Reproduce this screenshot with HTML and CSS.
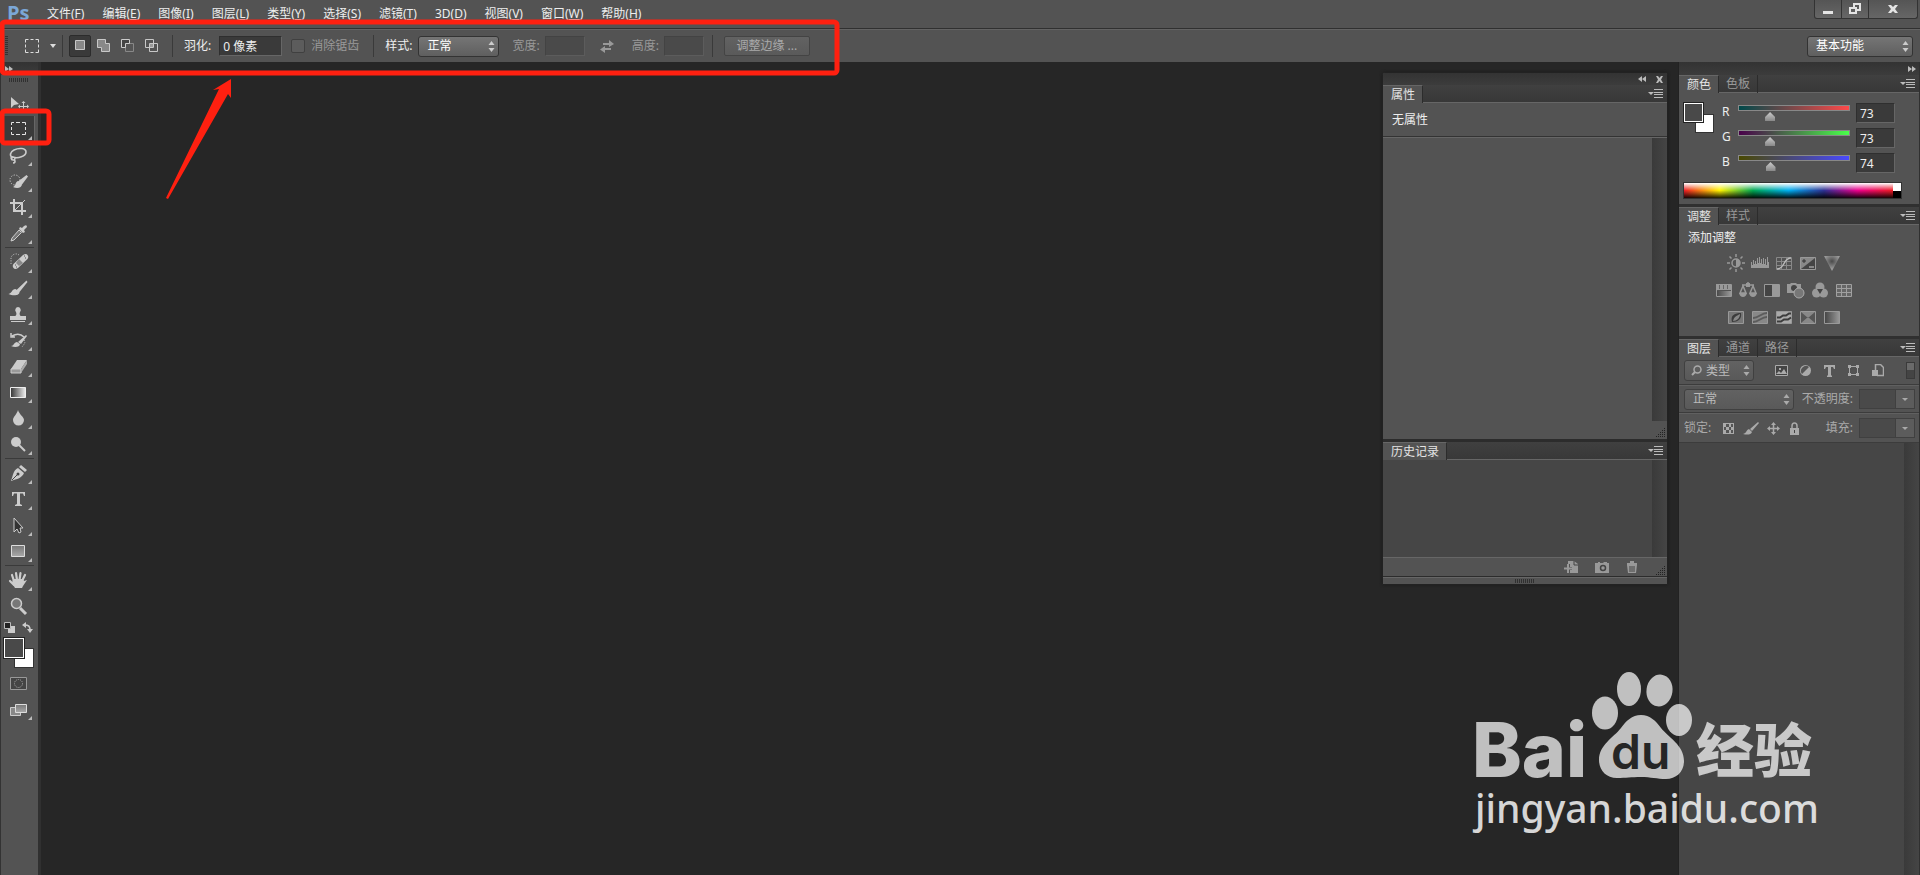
FILE: index.html
```
<!DOCTYPE html>
<html lang="zh-CN">
<head>
    <meta charset="UTF-8">
    <meta name="viewport" content="width=device-width, initial-scale=1.0">
    <title>Ps</title>
    <link rel="stylesheet" href="styles.css">
</head>
<body>

    <!-- Shared icons -->
    <svg class="sprite" aria-hidden="true">
        <symbol id="updown" viewBox="0 0 7 11"><path d="M3.500 0L6.500 4H.5zM3.500 11L6.500 7H.5z"/></symbol>
        <symbol id="menu-lines" viewBox="0 0 15 9"><path d="M0 3h6L3 6z"/><path d="M6 .5h9M6 3.500h9M6 5.500h9M6 8.500h9" stroke="currentColor"/></symbol>
        <symbol id="corner" viewBox="0 0 10 10"><path d="M9 0h1v1H9zM7 2h1v1H7zM9 2h1v1H9zM5 4h1v1H5zM7 4h1v1H7zM9 4h1v1H9zM3 6h1v1H3zM5 6h1v1H5zM7 6h1v1H7zM9 6h1v1H9zM1 8h1v1H1zM3 8h1v1H3zM5 8h1v1H5zM7 8h1v1H7zM9 8h1v1H9z"/></symbol>
        <symbol id="double-right" viewBox="0 0 8 6"><path d="M0 0l4 3-4 3zM4 0l4 3-4 3z"/></symbol>
        <linearGradient id="fade" x1="0" x2="1"><stop offset="0" stop-color="#333"/><stop offset="1" stop-color="#eee"/></linearGradient>
        <linearGradient id="steel" x1="0" x2="0" y1="0" y2="1"><stop offset="0" stop-color="#777"/><stop offset="1" stop-color="#aaa"/></linearGradient>
        <linearGradient id="grey" x1="0" x2="1"><stop offset="0" stop-color="#444"/><stop offset="1" stop-color="#999"/></linearGradient>
        <radialGradient id="glow" cx=".5" cy=".35" r=".5"><stop offset="0" stop-color="#4a4a4a"/><stop offset="1" stop-color="#999"/></radialGradient>
    </svg>

    <header class="menubar">
        <span class="logo">Ps</span>
        <nav class="menu">
            <a href="#">文件(<u>F</u>)</a>
            <a href="#">编辑(<u>E</u>)</a>
            <a href="#">图像(<u>I</u>)</a>
            <a href="#">图层(<u>L</u>)</a>
            <a href="#">类型(<u>Y</u>)</a>
            <a href="#">选择(<u>S</u>)</a>
            <a href="#">滤镜(<u>T</u>)</a>
            <a href="#">3D(<u>D</u>)</a>
            <a href="#">视图(<u>V</u>)</a>
            <a href="#">窗口(<u>W</u>)</a>
            <a href="#">帮助(<u>H</u>)</a>
        </nav>
        <div class="window-buttons">
            <button aria-label="最小化"><svg width="12" height="12"><path d="M1 8h10v3H1z"/></svg></button>
            <button aria-label="还原"><svg width="12" height="12" fill="none" stroke="#e4e4e4" stroke-width="2"><path d="M5 5V1h6v6H8M1 5h6v5H1z"/></svg></button>
            <button class="wide" aria-label="关闭"><svg width="12" height="12"><path d="M1 2h3l2 2 2-2h3L8 6l3 4H8L6 8l-2 2H1l3-4z"/></svg></button>
        </div>
    </header>

    <div class="options">
        <i class="grip-v"></i>
        <button class="preset" aria-label="选框工具">
            <svg width="14" height="14" fill="none" stroke="#ddd"><path d="M.5 3.500v-3h3M5.500.5h3M10.500.5h3v3M13.500 5.500v3M13.500 10.500v3h-3M8.500 13.500h-3M3.500 13.500h-3v-3M.5 8.500v-3"/></svg>
            <svg class="caret" width="6" height="4"><path d="M0 0h6L3 4z" fill="#ddd"/></svg>
        </button>
        <i class="divider"></i>
        <div class="modes">
            <button class="on" aria-label="新选区"><svg width="14" height="14"><path d="M2.500 1.500h9v9h-9z" fill="#888" stroke="#c8c8c8"/></svg></button>
            <button aria-label="添加到选区"><svg width="14" height="14"><path d="M.5.5h8v4h4v8h-8v-4h-4z" fill="#888" stroke="#c8c8c8"/></svg></button>
            <button aria-label="从选区减去"><svg width="14" height="14"><path d="M4.500 4.500h8v8h-8z" fill="#555" stroke="#888"/><path d="M4.500 8.500h-4v-8h8v4h-4z" fill="#444" stroke="#ccc"/></svg></button>
            <button aria-label="与选区交叉"><svg width="14" height="14" stroke="#c8c8c8" fill="none"><path d="M.5.500h8v8h-8zM4.500 4.500h8v8h-8z"/><path d="M5 5h3v3H5z" fill="#999" stroke="none"/></svg></button>
        </div>
        <i class="divider"></i>
        <label for="feather">羽化:</label>
        <input class="field feather" id="feather" type="text" value="0 像素">
        <label class="check"><input type="checkbox" disabled>消除锯齿</label>
        <i class="divider"></i>
        <label for="style">样式:</label>
        <div class="select style-select">
            <select id="style"><option>正常</option></select>
            <svg><use href="#updown"/></svg>
        </div>
        <label class="off" for="width">宽度:</label>
        <input class="field size" id="width" type="text" disabled>
        <button class="swap" aria-label="交换" disabled><svg width="14" height="13"><path d="M3 3h6V0l5 4-5 3V5H3zM11 8H5V6L0 9.500 5 13v-3h6z"/></svg></button>
        <label class="off" for="height">高度:</label>
        <input class="field size" id="height" type="text" disabled>
        <i class="divider"></i>
        <button class="refine" disabled>调整边缘 ...</button>
        <div class="select workspace">
            <select aria-label="工作区"><option>基本功能</option></select>
            <svg><use href="#updown"/></svg>
        </div>
    </div>

    <main class="workspace-area">

        <!-- Toolbox -->
        <aside class="tools">
            <div class="collapse"><svg width="8" height="6"><use href="#double-right"/></svg></div>
            <i class="grip-h"></i>
            <button class="single" aria-label="移动"><svg viewBox="0 0 24 24"><path d="M5 6v11l3-3 5-1z"/><path d="M17.500 11v9M13 15.500h9" stroke="#ccc"/><path d="M17.500 10l2 2h-4zM17.500 21l2-2h-4zM12 15.500l2-2v4zM23 15.500l-2-2v4z"/></svg></button>
            <button class="on" aria-label="选框"><svg viewBox="0 0 24 24"><path d="M5.500 8V5.500H8M10 5.500h4M16 5.500h3.500V8M19.500 10v3M19.500 15v2.500H16M14 17.500h-4M8 17.500H5.500V15M5.500 13v-3" fill="none" stroke="#e4e4e4"/></svg></button>
            <button aria-label="套索"><svg viewBox="0 0 24 24" fill="none" stroke="#ccc" stroke-width="1.600"><path d="M7 15c-4-2-3-6 1-8 5-2.500 12-2 12 2 0 4-8 7-13 5-3-1-2 3 0 3 3 0 2-3 0-3M8 17c2 1 1 3-1 3"/></svg></button>
            <button aria-label="快速选择"><svg viewBox="0 0 24 24"><circle cx="9" cy="11" r="5" fill="none" stroke="#ccc" stroke-dasharray="1.200 1.500"/><path d="M20.500 6l1.500 1.500-6 8-4-3zM12 12l4 3c0 4-5 5-9 3 3-1 2-5 5-6z"/></svg></button>
            <button aria-label="裁剪"><svg viewBox="0 0 24 24" fill="none" stroke="#ccc" stroke-width="2"><path d="M8 4v12h12M4 8h12v12"/><path d="M9 15L19 5" stroke-width="1"/></svg></button>
            <button aria-label="吸管"><svg viewBox="0 0 24 24"><path d="M14 6l2 1 2-2q3-2 3 1l-3 3 1 2-2 1-4-4z"/><path d="M13 9l2.500 2.500L8 19l-3 1 1-3z" fill="#777" stroke="#ccc"/></svg></button>
            <i class="rule"></i>
            <button aria-label="修复画笔"><svg viewBox="0 0 24 24"><path d="M13 5a5 5 0 0 0-8 3v6" fill="none" stroke="#ccc" stroke-dasharray="1 1.500"/><path d="M17 5q3-2 4.500 0t0 4L12 18q-3 2-4.500 0t0-4z"/><path d="M13 9l4 4-4 3-3-3z" fill="#888"/><path d="M18 6h1M19 8h1M9 15h1M10 17h1" stroke="#555"/></svg></button>
            <button aria-label="画笔"><svg viewBox="0 0 24 24"><path d="M20.500 4.500l1 1.500-8 10-3-2zM9.500 13l4 3c0 4-7 4-11 2 4-1 3-5 7-5z"/></svg></button>
            <button aria-label="仿制图章"><svg viewBox="0 0 24 24"><path d="M12 5a3 3 0 0 1 2 5c-1 2 0 4 1 4h5v4H4v-4h5c1 0 2-2 1-4a3 3 0 0 1 2-5zM5 19h14v1H5z"/></svg></button>
            <button aria-label="历史记录画笔"><svg viewBox="0 0 24 24"><path d="M6 8q7-4 12 1M5 5v4h4" fill="none" stroke="#ccc" stroke-width="1.500"/><path d="M20 7l1 1-6 8-3-2zM11 14l3 2c0 3-5 4-9 2 3 0 3-4 6-4z"/><path d="M18 12l1 3-3 4" fill="none" stroke="#ccc" stroke-dasharray="1 1.500"/></svg></button>
            <button aria-label="橡皮擦"><svg viewBox="0 0 24 24"><path d="M11 6h10l-6 9H5z"/><path d="M5 15h10v4H5z" fill="#999" stroke="#ccc"/><path d="M15 15l6-9v4l-6 9z" fill="#aaa"/></svg></button>
            <button aria-label="渐变"><svg viewBox="0 0 24 24"><path d="M4.500 7.500h15v10h-15z" fill="url(#fade)" stroke="#eee"/></svg></button>
            <button aria-label="模糊"><svg viewBox="0 0 24 24"><path d="M12 4c1 4 6 7 6 10a5.500 5.500 0 0 1-11 0c0-3 4-6 5-10z"/></svg></button>
            <button aria-label="减淡"><svg viewBox="0 0 24 24"><circle cx="10" cy="10" r="5"/><path d="M13 13l6 6" stroke="#ccc" stroke-width="2"/></svg></button>
            <i class="rule"></i>
            <button aria-label="钢笔"><svg viewBox="0 0 24 24"><path d="M15 4l6 5-2 2-6-5zM12 7l6 5c-2 5-7 6-13 8 2-5 2-11 7-13z"/><path d="M6 19l6-6" stroke="#444"/><circle cx="12" cy="13" r="1.500" fill="#444"/></svg></button>
            <button aria-label="文字"><svg viewBox="0 0 24 24"><path d="M6 5h13v4h-1l-1-2.500h-3V17l2 1v1H9v-1l2-1V6.500H8L7 9H6z"/></svg></button>
            <button aria-label="路径选择"><svg viewBox="0 0 24 24"><path d="M8 5v14l3-3 2 4 2-1-1-4h3z" fill="#333" stroke="#ccc"/></svg></button>
            <button aria-label="矩形"><svg viewBox="0 0 24 24"><path d="M5.500 6.500h13v11h-13z" fill="url(#steel)" stroke="#ddd"/></svg></button>
            <i class="rule"></i>
            <button aria-label="抓手"><svg viewBox="0 0 24 24"><path d="M8 13L6 7M11 12l-1-7M13.500 12l1-7M16 13l3-6M8 17l-4-4" stroke="#ccc" stroke-width="2.200" stroke-linecap="round"/><path d="M7 11h10l1 2 3-1-4 6-1 2H9l-3-5z"/></svg></button>
            <button class="single" aria-label="缩放"><svg viewBox="0 0 24 24"><path d="M14 14l6 6" stroke="#ccc" stroke-width="3"/><circle cx="10.500" cy="9.500" r="5" fill="#777" stroke="#ccc" stroke-width="1.500"/></svg></button>
            <div class="mini">
                <button aria-label="默认颜色"><svg width="11" height="11"><path d="M4 4h7v7H4z"/><path d="M.5.500h6v6h-6z" fill="#222" stroke="#bbb"/></svg></button>
                <button aria-label="切换颜色"><svg width="11" height="11"><path d="M2 3c5 0 6 1 6 6" fill="none" stroke="#ccc" stroke-width="1.500"/><path d="M0 3l4-3v6zM8 11L5 7h6z"/></svg></button>
            </div>
            <div class="swatches"><i class="back"></i><i class="front"></i></div>
            <button class="single" aria-label="快速蒙版"><svg viewBox="0 0 24 24"><path d="M4.500 6.500h16v12h-16z" fill="#444" stroke="#999"/><circle cx="12.500" cy="12.500" r="4" fill="none" stroke="#aaa" stroke-dasharray="1 1"/></svg></button>
            <button aria-label="屏幕模式"><svg viewBox="0 0 24 24"><path d="M4.500 10.500h10v8h-10z" fill="#888" stroke="#ccc"/><path d="M9.500 7.500h11v8h-11z" fill="url(#steel)" stroke="#ddd"/></svg></button>
        </aside>

        <section class="canvas"></section>

        <!-- Docked panels -->
        <aside class="dock">
            <div class="collapse"><svg width="8" height="6"><use href="#double-right"/></svg></div>

            <section class="panel">
                <div class="tabs">
                    <button class="tab active">颜色</button><button class="tab">色板</button>
                    <svg class="panel-menu"><use href="#menu-lines"/></svg>
                </div>
                <div class="color-body">
                    <div class="swatches small"><i class="back"></i><i class="front"></i></div>
                    <div class="channels">
                        <div class="channel">
                            <label for="red">R</label>
                            <div class="slider"><i class="bar red"></i><input id="red" type="range" max="255" value="73"></div>
                            <input class="field" aria-label="R" type="text" value="73">
                        </div>
                        <div class="channel">
                            <label for="green">G</label>
                            <div class="slider"><i class="bar green"></i><input id="green" type="range" max="255" value="73"></div>
                            <input class="field" aria-label="G" type="text" value="73">
                        </div>
                        <div class="channel">
                            <label for="blue">B</label>
                            <div class="slider"><i class="bar blue"></i><input id="blue" type="range" max="255" value="74"></div>
                            <input class="field" aria-label="B" type="text" value="74">
                        </div>
                    </div>
                </div>
                <div class="spectrum"><i class="hues"></i><i class="mono"></i></div>
            </section>

            <section class="panel">
                <div class="tabs">
                    <button class="tab active">调整</button><button class="tab">样式</button>
                    <svg class="panel-menu"><use href="#menu-lines"/></svg>
                </div>
                <div class="adjust-body">
                    <p>添加调整</p>
                    <div class="adjust-row">
                        <svg viewBox="0 0 18 18"><circle cx="9" cy="9" r="4" fill="none" stroke="#999" stroke-width="1.500"/><path d="M9 5a4 4 0 0 1 0 8z"/><path d="M9 0v3M9 15v3M0 9h3M15 9h3M2.500 2.500l2 2M13.500 13.500l2 2M2.500 15.500l2-2M13.500 4.500l2-2" stroke="#999" stroke-width="1.500"/></svg>
                        <svg viewBox="0 0 18 18"><path d="M0 14V8h1v3h1V6h1v4h1V7h1v3h1V4h1v5h1V3h1v6h1V5h1v5h1V4h1v6h1V5h1v6h1V3h1v5h1v6z"/></svg>
                        <svg viewBox="0 0 18 18"><path d="M1.500 3.500h15v12h-15zM6.500 3v12M11.500 3v12M1 7.500h15M1 11.500h15" fill="none" stroke="#888"/><path d="M2 15c8 0 6-11 14-11" fill="none" stroke="#bbb" stroke-width="1.500"/></svg>
                        <svg viewBox="0 0 18 18"><path d="M1.500 3.500h15v12h-15z" fill="#888" stroke="#999"/><path d="M2 15L16 4v11z" fill="#444"/><path d="M3 7h4M5 5v4" stroke="#333"/><path d="M10 13h5" stroke="#ccc"/></svg>
                        <svg viewBox="0 0 18 18"><path d="M1 2h16L9 17z" fill="url(#glow)"/></svg>
                    </div>
                    <div class="adjust-row">
                        <svg viewBox="0 0 18 18"><path d="M1 3h15v6H1z"/><path d="M1 10h15v6H1z" fill="url(#grey)"/><path d="M4.500 3v5M8.500 3v5M12.500 3v5" stroke="#666"/><path d="M1.500 3.500h15v12h-15z" fill="none" stroke="#999"/></svg>
                        <svg viewBox="0 0 18 18"><path d="M9 1v4M3 4h12M4 5l-3 7h6zM14 5l-3 7h6z" fill="none" stroke="#999" stroke-width="1.500"/><path d="M0 12h8q-1 4-4 4t-4-4M10 12h8q-1 4-4 4t-4-4M7 2h4v4H7z"/></svg>
                        <svg viewBox="0 0 18 18"><path d="M1.500 3.500h15v12h-15z" fill="#444" stroke="#999"/><path d="M9 4h7v11H9z"/></svg>
                        <svg viewBox="0 0 18 18"><path d="M0 3h3l1-1h5l1 1h4v9H0z"/><circle cx="7" cy="7" r="3" fill="#444"/><circle cx="12" cy="12" r="5" fill="#777" stroke="#aaa"/></svg>
                        <svg viewBox="0 0 18 18"><circle cx="9" cy="6" r="4.500"/><circle cx="5.500" cy="12" r="4.500"/><circle cx="12.500" cy="12" r="4.500"/><path d="M6 8h6l-3 5z" fill="#444"/></svg>
                        <svg viewBox="0 0 18 18"><path d="M1.500 3.500h15v12h-15zM6.500 3v12M11.500 3v12M1 7.500h15M1 11.500h15" fill="#666" stroke="#a0a0a0"/></svg>
                    </div>
                    <div class="adjust-row">
                        <svg viewBox="0 0 18 18"><path d="M1.500 3.500h15v12h-15z" fill="#777" stroke="#999"/><path d="M5 14C3 7 8 5 14 5c1 6-3 9-9 9z" fill="#3c3c3c"/><path d="M6 13C7 9 9 8 13 6c0 4-3 7-7 7z" fill="#888"/></svg>
                        <svg viewBox="0 0 18 18"><path d="M1.500 3.500h15v12h-15z" fill="#888" stroke="#999"/><path d="M2 10c6 0 8-5 14-5M2 14c6 0 8-5 14-5" fill="none" stroke="#5c5c5c" stroke-width="2"/></svg>
                        <svg viewBox="0 0 18 18"><path d="M1.500 3.500h15v12h-15z" fill="#aaa" stroke="#999"/><path d="M2 9.500h3l3-2h3l3-2h2M2 13.500h4l3-2h4l3-2" fill="none" stroke="#3c3c3c" stroke-width="2"/></svg>
                        <svg viewBox="0 0 18 18"><path d="M1.500 3.500h15v12h-15z" fill="#555" stroke="#999"/><path d="M2 4h14L9 10zM2 15h14L9 9z" fill="#888"/></svg>
                        <svg viewBox="0 0 18 18"><path d="M1.500 3.500h15v12h-15z" fill="url(#grey)" stroke="#999"/></svg>
                    </div>
                </div>
            </section>

            <section class="panel layers">
                <div class="tabs">
                    <button class="tab active">图层</button><button class="tab">通道</button><button class="tab">路径</button>
                    <svg class="panel-menu"><use href="#menu-lines"/></svg>
                </div>
                <div class="layer-row filter">
                    <div class="select kind">
                        <select aria-label="类型" disabled><option>类型</option></select>
                        <svg class="lens" viewBox="0 0 11 11"><circle cx="6.500" cy="4.500" r="3.500" fill="none" stroke="#aaa" stroke-width="1.500"/><path d="M4 7l-3 3" stroke="#aaa" stroke-width="2"/></svg>
                        <svg><use href="#updown"/></svg>
                    </div>
                    <div class="filters">
                        <svg viewBox="0 0 13 13"><path d="M.5 1.500h12v10H.5z" fill="#444" stroke="#aaa"/><path d="M1 10l3-3 2 2 3-4 3 5zM4 4h2v2H4z"/></svg>
                        <svg viewBox="0 0 13 13"><circle cx="6.500" cy="6.500" r="5.500"/><path d="M3 10a5 5 0 0 1 7-7z" fill="#555"/></svg>
                        <svg viewBox="0 0 13 13"><path d="M1 1h11v4h-1l-1-2H8v8l1 1v1H4v-1l1-1V3H3L2 5H1z"/></svg>
                        <svg viewBox="0 0 13 13"><path d="M2.500 2.500h8v8h-8z" fill="none" stroke="#aaa"/><path d="M1 1h3v3H1zM9 1h3v3H9zM1 9h3v3H1zM9 9h3v3H9z"/></svg>
                        <svg viewBox="0 0 13 13"><path d="M4.500 7V.5h5l3 3v8H6" fill="none" stroke="#aaa" stroke-width="1.500"/><path d="M1 6h6v6H1z"/></svg>
                    </div>
                    <button class="toggle" aria-label="滤镜开关" disabled></button>
                </div>
                <div class="layer-row">
                    <div class="select blend">
                        <select aria-label="混合模式" disabled><option>正常</option></select>
                        <svg><use href="#updown"/></svg>
                    </div>
                    <label class="push" for="opacity">不透明度:</label>
                    <div class="combo"><input id="opacity" type="text" disabled><button aria-label="不透明度" disabled></button></div>
                </div>
                <div class="layer-row lock-row">
                    <span>锁定:</span>
                    <div class="locks">
                        <svg viewBox="0 0 13 13"><path d="M1 1h11v11H1z"/><path d="M4 2h3v3H4zM9 2h2v3H9zM2 5h2v3H2zM7 5h2v3H7zM4 8h3v3H4zM9 8h2v3H9z" fill="#555"/></svg>
                        <svg viewBox="0 0 16 13"><path d="M15 0l1 1-7 8-2-2zM6 7l3 3c-1 3-5 3-9 2 4-1 3-4 6-5z"/></svg>
                        <svg viewBox="0 0 13 13"><path d="M6.500 0L9 3H4zM6.500 13L9 10H4zM0 6.500L3 4v5zM13 6.500L10 4v5z"/><path d="M6.500 2v9M2 6.500h9" stroke="#aaa" stroke-width="1.500"/></svg>
                        <svg viewBox="0 0 13 13"><path d="M2 6h9v7H2z"/><path d="M4 6V4q0-3 2.500-3T9 4v2" fill="none" stroke="#aaa" stroke-width="1.500"/><path d="M6 8h1v3H6z" fill="#444"/></svg>
                    </div>
                    <label class="push" for="fill">填充:</label>
                    <div class="combo"><input id="fill" type="text" disabled><button aria-label="填充" disabled></button></div>
                </div>
                <div class="layer-list"><i class="scroll"></i></div>
            </section>
        </aside>
    </main>

    <!-- Floating panel group -->
    <div class="floating">
        <div class="collapse">
            <svg width="8" height="6"><path d="M4 0L0 3l4 3zM8 0L4 3l4 3z"/></svg>
            <svg width="7" height="7"><path d="M0 0h2l1.500 2L5 0h2L5 3.500 7 7H5L3.500 5 2 7H0l2-3.500z"/></svg>
        </div>
        <div class="tabs">
            <button class="tab active">属性</button>
            <svg class="panel-menu"><use href="#menu-lines"/></svg>
        </div>
        <p class="empty">无属性</p>
        <div class="properties">
            <i class="scroll"></i>
            <svg class="corner"><use href="#corner"/></svg>
        </div>
        <div class="tabs">
            <button class="tab active">历史记录</button>
            <svg class="panel-menu"><use href="#menu-lines"/></svg>
        </div>
        <div class="history"><i class="scroll"></i></div>
        <div class="history-tools">
            <button aria-label="从当前状态创建新文档"><svg width="14" height="12"><path d="M4 0h6l4 3v9H6V9h2V6H6V3H4z"/><path d="M4 3v9M0 7.500h8" stroke="#999" stroke-width="2"/><path d="M10 0v4h4" fill="none" stroke="#444"/></svg></button>
            <button aria-label="创建新快照"><svg width="14" height="12"><path d="M0 2h3V1h2v1h3l1-1h3v1h2v10H0z"/><circle cx="8" cy="7" r="2.500" fill="#999" stroke="#444" stroke-width="1.500"/></svg></button>
            <button aria-label="删除"><svg width="12" height="12"><path d="M4 0h4v2h3v2H1V2h3zM1 4h10l-1 8H2z"/><path d="M4 5v6M6 5v6M8 5v6" stroke="#444"/></svg></button>
            <svg class="corner"><use href="#corner"/></svg>
        </div>
        <div class="foot"><i class="grip-h"></i></div>
    </div>

    <!-- Callouts -->
    <svg class="callouts" width="850" height="210" aria-hidden="true">
        <rect x="2" y="22" width="835" height="51" rx="3"/>
        <rect x="2" y="111" width="47" height="32" rx="3"/>
        <path d="M231 79L213 90l6-1L166 198l2 1L228 94l3 4z"/>
    </svg>

    <!-- Watermark -->
    <svg class="watermark" width="370" height="190" viewBox="0 0 370 190">
        <g fill="#fff" fill-opacity=".71">
            <text class="brand" x="12" y="117">Bai</text>
            <ellipse cx="145" cy="53" rx="13" ry="16.500"/>
            <ellipse cx="169" cy="29" rx="12" ry="17"/>
            <ellipse cx="199.500" cy="30.500" rx="13" ry="16" transform="rotate(8 199.500 30.500)"/>
            <ellipse cx="219" cy="60" rx="13" ry="16"/>
            <path d="M181 55c9 0 15 6 20 13 7 9 23 17 23 33 0 11-8 18-18 18-9 0-15-2-25-2s-15 1-24 1c-11 0-18-8-18-18 0-15 14-22 22-32 5-7 11-13 20-13z"/>
            <text class="brand-cn" x="236" y="112">经验</text>
        </g>
        <text class="brand-du" x="151" y="109">du</text>
        <text class="brand-url" x="15" y="163">jingyan.baidu.com</text>
    </svg>

</body>
</html>
```
FILE: styles.css
```
* {
    margin: 0;
    padding: 0;
    box-sizing: border-box;
}

body {
    font-family: "Noto Sans", "Noto Sans CJK SC", sans-serif;
    font-size: 12px;
    line-height: 16px;
    color: #eee;
    background: #262626;
    height: 100vh;
    overflow: hidden;
    display: flex;
    flex-direction: column;
    position: relative;
}

button, input, select {
    font: inherit;
    color: inherit;
    background: none;
    border: none;
}

svg {
    display: block;
    fill: #ccc;
    flex: none;
}

.sprite {
    position: absolute;
    width: 0;
    height: 0;
}

/* Menu bar */
.menubar {
    display: flex;
    height: 29px;
    background: #535353;
    border-bottom: 1px solid #303030;
}

.logo {
    width: 47px;
    padding-left: 7px;
    font: bold 20px/26px "Open Sans", sans-serif;
    color: #7ba7d7;
}

.menu {
    display: flex;
    gap: 18px;
    padding-top: 6px;
}

.menu a {
    color: #eee;
    text-decoration: none;
}

.window-buttons {
    display: flex;
    height: 19px;
    margin: 0 2px 0 auto;
    border: 1px solid #333;
    border-top: none;
    border-radius: 0 0 3px 3px;
    background: linear-gradient(#555, #666);
}

.window-buttons button {
    width: 27px;
    display: flex;
    justify-content: center;
    padding-top: 3px;
    border-right: 1px solid #333;
}

.window-buttons .wide {
    width: 48px;
    border: none;
}

.window-buttons svg {
    fill: #e4e4e4;
}

.window-buttons [fill="none"] {
    fill: none;
}

/* Options bar */
.options {
    display: flex;
    align-items: center;
    height: 33px;
    padding: 0 7px 0 5px;
    background: #535353;
    border-top: 1px solid #636363;
}

.grip-v {
    width: 3px;
    height: 20px;
    background: repeating-linear-gradient(#333 0 1px, #535353 1px 2px);
}

.preset {
    display: flex;
    align-items: center;
    gap: 11px;
    margin-left: 17px;
}

svg[fill="none"] {
    fill: none;
}

.divider {
    width: 1px;
    height: 22px;
    margin: 0 11px 0 6px;
    background: #3a3a3a;
}

.modes {
    display: flex;
    gap: 2px;
    margin-left: -5px;
    margin-right: 3px;
}

.modes button {
    width: 22px;
    height: 22px;
    display: flex;
    align-items: center;
    justify-content: center;
}

.modes .on {
    background: #3a3a3a;
    border: 1px solid #2c2c2c;
    border-radius: 2px;
}

.field {
    height: 20px;
    padding: 0 3px;
    background: #3a3a3a;
    border: 1px solid #2f2f2f;
    border-bottom-color: #666;
    border-right-color: #666;
}

.field:disabled {
    background: #4a4a4a;
    border-color: #434343 #5c5c5c #5c5c5c #434343;
}

.feather {
    width: 63px;
    margin: 0 9px 0 8px;
}

.check {
    display: flex;
    align-items: center;
    gap: 6px;
    margin-right: 8px;
    color: #999;
}

.check input {
    appearance: none;
    width: 14px;
    height: 14px;
    border: 1px solid #404040;
    border-radius: 2px;
    background: #5c5c5c;
}

/* Drop-downs: the arrows share one grid cell with the select */
.select {
    display: grid;
    align-items: center;
}

.select select, .select svg {
    grid-area: 1 / 1;
}

.select select {
    appearance: none;
    width: 100%;
    height: 21px;
    padding: 0 8px;
    border: 1px solid #333;
    border-radius: 3px;
    background: linear-gradient(#757575, #5f5f5f);
    color: #fff;
    opacity: 1;
}

.select select:disabled {
    background: linear-gradient(#626262, #595959);
    border-color: #404040;
    color: #bbb;
}

.select svg {
    width: 7px;
    height: 11px;
    justify-self: end;
    margin-right: 4px;
    pointer-events: none;
}

.style-select {
    width: 81px;
    margin: 0 13px 0 6px;
}

.off {
    color: #999;
}

.size {
    width: 40px;
    margin: 0 15px 0 5px;
}

.swap {
    margin-right: 18px;
}

.swap svg {
    fill: #999;
}

.size + .divider {
    margin-left: -7px;
}

.refine {
    width: 86px;
    height: 20px;
    line-height: 18px;
    border: 1px solid #444;
    border-radius: 2px;
    background: linear-gradient(#626262, #5a5a5a);
    color: #aaa;
}

.workspace {
    width: 106px;
    margin-left: auto;
}

/* Work area */
.workspace-area {
    flex: 1;
    min-height: 0;
    display: flex;
}

.canvas {
    flex: 1;
}

.collapse {
    height: 13px;
    display: flex;
    align-items: center;
    justify-content: flex-end;
    background: linear-gradient(#333, #3c3c3c);
}

.collapse svg {
    fill: #bbb;
}

.tools {
    width: 41px;
    display: flex;
    flex-direction: column;
    background: #535353;
    border-left: 1px solid #333;
    border-right: 3px solid #303030;
}

.tools .collapse {
    justify-content: flex-start;
    padding-left: 4px;
}

.grip-h {
    width: 20px;
    height: 4px;
    background: repeating-linear-gradient(90deg, #303030 0 1px, #535353 1px 2px);
}

.tools .grip-h {
    margin: 3px 0 8px 8px;
}

.tools > button {
    position: relative;
    height: 26px;
    padding-left: 5px;
}

.tools > button svg {
    width: 24px;
    height: 24px;
}

.tools > button::after {
    content: "";
    position: absolute;
    left: 27px;
    bottom: 2px;
    border-left: 4px solid transparent;
    border-bottom: 4px solid #bbb;
}

.tools > .single::after {
    display: none;
}

.tools > .on {
    background: #3a3a3a;
    border-right: 1px solid #666;
    margin-right: 3px;
}

.rule {
    height: 1px;
    margin: 1px 4px;
    background: #3a3a3a;
}

.mini {
    display: flex;
    gap: 7px;
    padding: 3px 3px 5px;
}

.swatches {
    display: grid;
    width: 30px;
    height: 30px;
    margin-left: 3px;
}

.swatches i {
    grid-area: 1 / 1;
    width: 20px;
    height: 20px;
    border: 1px solid #333;
}

.swatches .back {
    place-self: end;
    background: #fff;
}

.swatches .front {
    border: 1px solid #fff;
    outline: 1px solid #222;
    background: #494949;
}

.swatches + button {
    margin-top: 2px;
}

/* Panels */
.dock {
    width: 242px;
    display: flex;
    flex-direction: column;
    background: #303030;
    border-left: 1px solid #222;
    border-right: 1px solid #303030;
}

.dock .collapse {
    padding-right: 3px;
}

.panel {
    background: #535353;
    margin-bottom: 3px;
}

.tabs {
    display: flex;
    height: 18px;
    background: linear-gradient(#404040, #383838);
    border-bottom: 1px solid #666;
}

.tab {
    height: 18px;
    padding: 0 7px;
    color: #999;
    border-right: 1px solid #2c2c2c;
}

.tab.active {
    padding-left: 8px;
    background: #535353;
    border-top: 1px solid #666;
    color: #e4e4e4;
}

.panel-menu {
    width: 15px;
    height: 9px;
    margin: 4px 4px 0 auto;
    color: #bbb;
    fill: #bbb;
}

.color-body {
    display: flex;
    padding: 10px 0 0 4px;
}

.swatches.small {
    margin-left: 1px;
}

.small i {
    width: 19px;
    height: 19px;
}

.channels {
    flex: 1;
    margin-left: 8px;
}

.channel {
    display: flex;
    height: 25px;
}

.channel label {
    width: 16px;
    padding-top: 1px;
}

.channel .field {
    width: 39px;
    margin-left: 6px;
}

.slider {
    flex: 1;
    padding-top: 2px;
}

.channels .channel {
    padding-right: 24px;
}

.bar {
    display: block;
    height: 6px;
    border: 1px solid #888;
}

.red {
    background: linear-gradient(90deg, #00494a, #ff494a);
}

.green {
    background: linear-gradient(90deg, #49004a, #49ff4a);
}

.blue {
    background: linear-gradient(90deg, #494900, #4949ff);
}

.slider input {
    appearance: none;
    display: block;
    width: calc(100% + 10px);
    height: 11px;
    margin: 0 -5px;
}

.slider input::-webkit-slider-thumb {
    appearance: none;
    width: 10px;
    height: 9px;
    background: linear-gradient(#ccc, #888);
    clip-path: polygon(50% 0, 100% 55%, 100% 100%, 0 100%, 0 55%);
}

.spectrum {
    display: flex;
    height: 17px;
    margin: 4px 17px 5px 4px;
    border: 1px solid #333;
}

.hues {
    flex: 1;
    background:
        linear-gradient(rgba(255, 255, 255, 1), rgba(255, 255, 255, 0) 50%, rgba(0, 0, 0, 0) 50%, rgba(0, 0, 0, 0.9)),
        linear-gradient(90deg, #ed1c24, #fff200 17%, #00a651 33%, #00aeef 50%, #2e3192 67%, #ec008c 83%, #ed1c24);
}

.mono {
    width: 8px;
    background: linear-gradient(#fff 50%, #000 50%);
}

.adjust-body {
    padding: 5px 34px 9px 4px;
}

.adjust-body p {
    padding-left: 5px;
}

.adjust-row {
    display: flex;
    justify-content: center;
    gap: 6px;
    padding: 8px 0 1px;
}

.adjust-row svg {
    width: 18px;
    height: 18px;
    fill: #999;
}

.layers {
    flex: 1;
    display: flex;
    flex-direction: column;
    margin: 0;
}

.layer-row {
    display: flex;
    align-items: center;
    height: 28px;
    padding: 0 4px 0 5px;
    border-bottom: 1px solid #3c3c3c;
    border-top: 1px solid #606060;
    color: #aaa;
}

.layer-row.filter {
    border-top: none;
}

.layer-row.lock-row {
    height: 30px;
}

.layer-row svg {
    fill: #aaa;
}

.kind {
    width: 70px;
}

.kind select {
    padding-left: 21px;
}

.select .lens {
    width: 11px;
    height: 11px;
    justify-self: start;
    margin-left: 7px;
}

.filters {
    flex: 1;
    display: flex;
    gap: 11px;
    padding-left: 21px;
}

.filters svg, .locks svg {
    width: 13px;
    height: 13px;
}

.toggle {
    width: 9px;
    height: 17px;
    border: 1px solid #3a3a3a;
    background: linear-gradient(#6a6a6a 50%, #444 50%);
}

.blend {
    width: 110px;
}

.push {
    margin-left: auto;
    margin-right: 6px;
}

.combo {
    display: flex;
    width: 56px;
    height: 20px;
    border: 1px solid #404040;
}

.combo input {
    width: 35px;
    background: #4a4a4a;
}

.combo button {
    flex: 1;
    display: flex;
    align-items: center;
    justify-content: center;
    background: #5c5c5c;
    border-left: 1px solid #404040;
}

.combo button::after {
    content: "";
    border: 3px solid transparent;
    border-top-color: #aaa;
    border-bottom: none;
}

.locks {
    display: flex;
    gap: 8px;
    padding-left: 11px;
}

.locks svg:nth-child(2) {
    width: 16px;
}

.layer-list {
    flex: 1;
    display: flex;
    justify-content: flex-end;
    background: #464646;
}

.scroll {
    width: 15px;
    background: linear-gradient(90deg, #3a3a3a, #454545);
}

/* Floating group sits over the canvas */
.floating {
    position: absolute;
    top: 72px;
    right: 252px;
    width: 286px;
    background: #535353;
    border: 1px solid #222;
    border-radius: 3px 3px 0 0;
    box-shadow: 0 0 3px #1c1c1c;
}

.floating .collapse {
    height: 12px;
    gap: 10px;
    padding-right: 4px;
}

.empty {
    padding: 9px 9px 8px;
    border-bottom: 1px solid #333;
}

.properties {
    display: flex;
    flex-direction: column;
    align-items: flex-end;
    height: 305px;
    border-top: 1px solid #666;
    border-bottom: 3px solid #2c2c2c;
}

.properties .scroll {
    height: 283px;
}

.corner {
    width: 10px;
    height: 10px;
    margin: 7px 2px 0 0;
    fill: #222;
}

.history {
    display: flex;
    justify-content: flex-end;
    height: 97px;
    background: #464646;
}

.history-tools {
    display: flex;
    align-items: center;
    justify-content: flex-end;
    gap: 17px;
    height: 20px;
    border-top: 1px solid #666;
    border-bottom: 1px solid #2c2c2c;
}

.history-tools button svg {
    fill: #999;
}

.foot {
    display: flex;
    justify-content: center;
    padding: 1px 0;
    border-top: 1px solid #666;
}

/* Overlays */
.callouts {
    position: absolute;
    top: 0;
    left: 0;
    pointer-events: none;
}

.callouts rect {
    fill: none;
    stroke: #ff2010;
    stroke-width: 5px;
}

.callouts path {
    fill: #ff2010;
}

.watermark {
    position: absolute;
    right: 90px;
    bottom: 25px;
    pointer-events: none;
    fill: #262626;
}

.brand {
    font: 800 75px Inter, sans-serif;
}

.brand-cn {
    font: 900 58px "Noto Sans CJK SC", sans-serif;
}

.brand-du {
    font: 600 48px Inter, sans-serif;
}

.brand-url {
    font: 500 39px "Noto Sans", sans-serif;
    fill: #fff;
    fill-opacity: .82;
}
```
